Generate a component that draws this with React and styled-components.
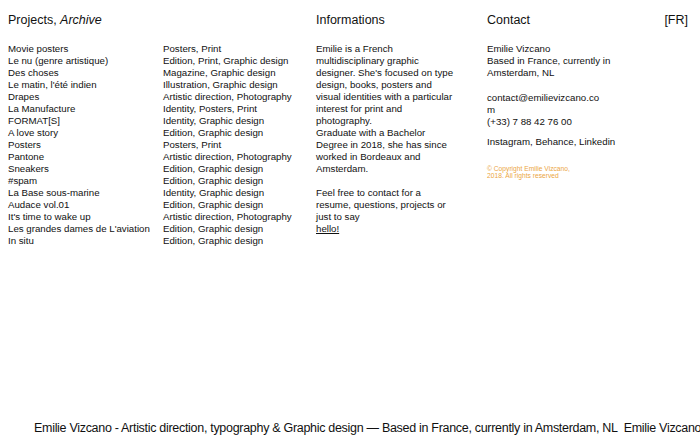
import React from 'react';
import styled, { createGlobalStyle } from 'styled-components';

const GlobalStyle = createGlobalStyle`
  html, body {
    margin: 0;
    padding: 0;
    background: #fff;
  }
  body {
    font-family: "Liberation Sans", Arial, Helvetica, sans-serif;
    color: #111;
  }
`;

const Page = styled.div`
  min-height: 100vh;
  display: flex;
  flex-direction: column;
  box-sizing: border-box;
  padding: 13px 12px 3px 8px;
  overflow: hidden;
`;

const Grid = styled.div`
  display: grid;
  grid-template-columns: 155px 153px 171px 1fr auto;
  grid-template-rows: auto auto;
  row-gap: 16px;
  align-items: start;
`;

const Heading = styled.h2`
  margin: 0;
  font-size: 12.5px;
  font-weight: normal;
  line-height: 14px;
  grid-column: ${props => props.span ? `span ${props.span}` : 'auto'};
  justify-self: ${props => props.end ? 'end' : 'start'};
  em {
    font-style: italic;
  }
`;

const ProjectList = styled.ul`
  grid-column: span 2;
  list-style: none;
  margin: 0;
  padding: 0;
`;

const ProjectRow = styled.li`
  display: grid;
  grid-template-columns: 155px 153px;
  font-size: 9.7px;
  line-height: 12px;
  white-space: nowrap;
`;

const Column = styled.div`
  width: ${props => props.width}px;
  font-size: 9.7px;
  line-height: 12px;
  grid-column: ${props => props.span ? `span ${props.span}` : 'auto'};
`;

const Paragraph = styled.p`
  margin: 0 0 ${props => props.gap || 0}px 0;
  white-space: ${props => props.nowrap ? 'nowrap' : 'normal'};
`;

const Link = styled.a`
  color: inherit;
  text-decoration: underline;
`;

const Copyright = styled.p`
  margin: 17px 0 0 0;
  font-size: 6.7px;
  line-height: 7px;
  color: #eba63f;
`;

const Footer = styled.footer`
  margin-top: auto;
  display: flex;
  gap: 6px;
  padding-left: 26px;
  white-space: nowrap;
  font-size: 12.5px;
  line-height: 14px;
  letter-spacing: -0.3px;
`;

const projects = [
  ['Movie posters', 'Posters, Print'],
  ['Le nu (genre artistique)', 'Edition, Print, Graphic design'],
  ['Des choses', 'Magazine, Graphic design'],
  ["Le matin, l'été indien", 'Illustration, Graphic design'],
  ['Drapes', 'Artistic direction, Photography'],
  ['La Manufacture', 'Identity, Posters, Print'],
  ['FORMAT[S]', 'Identity, Graphic design'],
  ['A love story', 'Edition, Graphic design'],
  ['Posters', 'Posters, Print'],
  ['Pantone', 'Artistic direction, Photography'],
  ['Sneakers', 'Edition, Graphic design'],
  ['#spam', 'Edition, Graphic design'],
  ['La Base sous-marine', 'Identity, Graphic design'],
  ['Audace vol.01', 'Edition, Graphic design'],
  ["It's time to wake up", 'Artistic direction, Photography'],
  ["Les grandes dames de L'aviation", 'Edition, Graphic design'],
  ['In situ', 'Edition, Graphic design'],
];

const tagline = 'Emilie Vizcano - Artistic direction, typography & Graphic design — Based in France, currently in Amsterdam, NL';

const App = () => (
  <Page>
    <GlobalStyle />
    <Grid>
      <Heading span={2}>Projects, <em>Archive</em></Heading>
      <Heading>Informations</Heading>
      <Heading>Contact</Heading>
      <Heading end>[FR]</Heading>

      <ProjectList>
        {projects.map(([name, tags]) => (
          <ProjectRow key={name}>
            <span>{name}</span>
            <span>{tags}</span>
          </ProjectRow>
        ))}
      </ProjectList>

      <Column width={141}>
        <Paragraph gap={12}>
          Emilie is a French multidisciplinary graphic designer. She's focused on type
          design, books, posters and visual identities with a particular interest for
          print and photography.<br />
          Graduate with a Bachelor Degree in 2018, she has since worked in Bordeaux and Amsterdam.
        </Paragraph>
        <Paragraph>
          Feel free to contact for a resume, questions, projects or just to say<br />
          <Link href="#">hello!</Link>
        </Paragraph>
      </Column>

      <Column width={128} span={2}>
        <Paragraph gap={13}>
          Emilie Vizcano<br />
          Based in France, currently in Amsterdam, NL
        </Paragraph>
        <Paragraph gap={8}>
          contact@emilievizcano.co<br />m<br />
          (+33) 7 88 42 76 00
        </Paragraph>
        <Paragraph nowrap>Instagram, Behance, Linkedin</Paragraph>
        <Copyright>
          © Copyright Emilie Vizcano,<br />
          2018. All rights reserved
        </Copyright>
      </Column>
    </Grid>

    <Footer>
      <span>{tagline}</span>
      <span>{tagline}</span>
    </Footer>
  </Page>
);

export default App;
